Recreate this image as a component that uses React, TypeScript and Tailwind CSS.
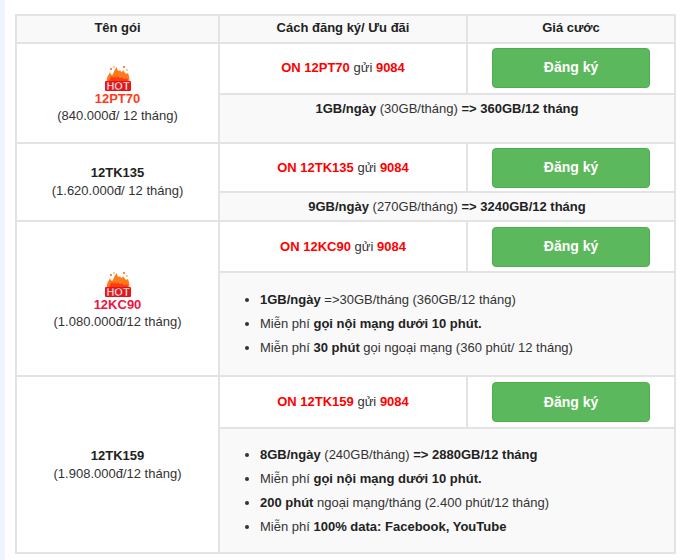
import type { ReactNode } from 'react';

function HotBadge() {
  return (
    <svg width="32" height="27" viewBox="0 0 32 27" aria-hidden="true">
      {/* ngọn lửa */}
      <path d="M5 18 C4 13 7 11 8 8 C9 11 10 12 11 10 C12 7 13 5 15 3 C15 7 17 8 18 6 C19 8 20 9 21 6 C23 9 24 11 26 9 C27 12 28 15 27 18 Z" fill="#ff7a1a" />
      <path d="M7 18 C7 15 9 14 10 12 C11 14 12 14 13 12 C14 14 15 15 16 12 C17 14 19 15 20 13 C21 15 23 16 25 14 C26 16 26 17 25 18 Z" fill="#ff3b12" />
      <circle cx="9" cy="5" r="1" fill="#ff5a1a" />
      <circle cx="22" cy="3" r="1" fill="#ff5a1a" />
      <circle cx="25" cy="6" r="0.8" fill="#ff8a1a" />
      <circle cx="12" cy="3" r="0.8" fill="#ff8a1a" />
      <rect x="3" y="17" width="26" height="10" rx="1" fill="#e8141b" />
      <text x="16" y="26" textAnchor="middle" fontFamily="Liberation Sans, Arial, sans-serif" fontWeight="bold" fontSize="11" fill="#ffffff" stroke="#c00000" strokeWidth="0.4">HOT</text>
    </svg>
  );
}

function DangKy() {
  return (
    <button className="mx-auto flex h-[40px] w-[158px] items-center justify-center rounded-[4px] border border-[#4cae4c] bg-[#5cb85c] text-[14px] font-bold text-white">
      Đăng ký
    </button>
  );
}

function Cu({ code }: { code: string }) {
  return (
    <span className="font-bold">
      <span className="text-[#ff0000]">ON {code}</span>{' '}
      <span className="font-normal text-[#333]">gửi</span>{' '}
      <span className="text-[#ff0000]">9084</span>
    </span>
  );
}

function Li({ children }: { children: ReactNode }) {
  return <li className="leading-[24px]">{children}</li>;
}

const td = 'border-2 border-[#e3e3e3]';

export default function App() {
  return (
    <div className="flex min-h-[560px] bg-white text-[13px] text-[#333]" style={{ fontFamily: '"Liberation Sans", Arial, sans-serif' }}>
      <div className="w-[5px] shrink-0 bg-[#eef5fd]" />
      <div className="pl-[10px] pt-[14px]">
        <table className="w-[659px] table-fixed border-collapse text-center">
          <colgroup>
            <col className="w-[203px]" />
            <col className="w-[248px]" />
            <col className="w-[208px]" />
          </colgroup>
          <thead>
            <tr className="bg-[#f9f9f9]">
              <th className={`${td} h-[28px] pb-[2px] font-bold text-[#222]`}>Tên gói</th>
              <th className={`${td} pb-[2px] font-bold text-[#222]`}>Cách đăng ký/ Ưu đãi</th>
              <th className={`${td} pb-[2px] font-bold text-[#222]`}>Giá cước</th>
            </tr>
          </thead>
          <tbody>
            {/* 12PT70 */}
            <tr>
              <td rowSpan={2} className={`${td} bg-white pt-[4px] align-middle`}>
                <div className="flex flex-col items-center">
                  <HotBadge />
                  <div className="font-bold leading-[15px] text-[#ff3a1a]">12PT70</div>
                  <div className="leading-[20px]">(840.000đ/ 12 tháng)</div>
                </div>
              </td>
              <td className={`${td} h-[51px] bg-white pb-[2px]`}><Cu code="12PT70" /></td>
              <td className={`${td} bg-white pb-[2px]`}><DangKy /></td>
            </tr>
            <tr className="bg-[#f9f9f9]">
              <td colSpan={2} className={`${td} h-[49px] pt-[4px] align-top leading-[20px]`}>
                <b className="text-[#222]">1GB/ngày</b> (30GB/tháng) <b className="text-[#222]">=&gt; 360GB/12 tháng</b>
              </td>
            </tr>

            {/* 12TK135 */}
            <tr>
              <td rowSpan={2} className={`${td} bg-white align-middle`}>
                <div className="font-bold leading-[18px] text-[#222]">12TK135</div>
                <div className="leading-[18px]">(1.620.000đ/ 12 tháng)</div>
              </td>
              <td className={`${td} h-[49px] bg-white`}><Cu code="12TK135" /></td>
              <td className={`${td} bg-white`}><DangKy /></td>
            </tr>
            <tr className="bg-[#f9f9f9]">
              <td colSpan={2} className={`${td} h-[29px] leading-[20px]`}>
                <b className="text-[#222]">9GB/ngày</b> (270GB/tháng) <b className="text-[#222]">=&gt; 3240GB/12 tháng</b>
              </td>
            </tr>

            {/* 12KC90 */}
            <tr>
              <td rowSpan={2} className={`${td} bg-white pt-[4px] align-middle`}>
                <div className="flex flex-col items-center">
                  <HotBadge />
                  <div className="font-bold leading-[15px] text-[#ee1440]">12KC90</div>
                  <div className="leading-[20px]">(1.080.000đ/12 tháng)</div>
                </div>
              </td>
              <td className={`${td} h-[51px] bg-white`}><Cu code="12KC90" /></td>
              <td className={`${td} bg-white`}><DangKy /></td>
            </tr>
            <tr className="bg-[#f9f9f9]">
              <td colSpan={2} className={`${td} h-[104px] pl-[8px] text-left`}>
                <ul className="list-disc pl-[32px]">
                  <Li><b className="text-[#222]">1GB/ngày</b> =&gt;30GB/tháng (360GB/12 tháng)</Li>
                  <Li>Miễn phí <b className="text-[#222]">gọi nội mạng dưới 10 phút.</b></Li>
                  <Li>Miễn phí <b className="text-[#222]">30 phút</b> gọi ngoại mạng (360 phút/ 12 tháng)</Li>
                </ul>
              </td>
            </tr>

            {/* 12TK159 */}
            <tr>
              <td rowSpan={2} className={`${td} bg-white align-middle`}>
                <div className="font-bold leading-[18px] text-[#222]">12TK159</div>
                <div className="leading-[18px]">(1.908.000đ/12 tháng)</div>
              </td>
              <td className={`${td} h-[52px] bg-white`}><Cu code="12TK159" /></td>
              <td className={`${td} bg-white`}><DangKy /></td>
            </tr>
            <tr className="bg-[#f9f9f9]">
              <td colSpan={2} className={`${td} h-[125px] pl-[8px] text-left`}>
                <ul className="list-disc pl-[32px]">
                  <Li><b className="text-[#222]">8GB/ngày</b> (240GB/tháng) <b className="text-[#222]">=&gt; 2880GB/12 tháng</b></Li>
                  <Li>Miễn phí <b className="text-[#222]">gọi nội mạng dưới 10 phút.</b></Li>
                  <Li><b className="text-[#222]">200 phút</b> ngoại mạng/tháng (2.400 phút/12 tháng)</Li>
                  <Li>Miễn phí <b className="text-[#222]">100% data: Facebook, YouTube</b></Li>
                </ul>
              </td>
            </tr>
          </tbody>
        </table>
      </div>
    </div>
  );
}
